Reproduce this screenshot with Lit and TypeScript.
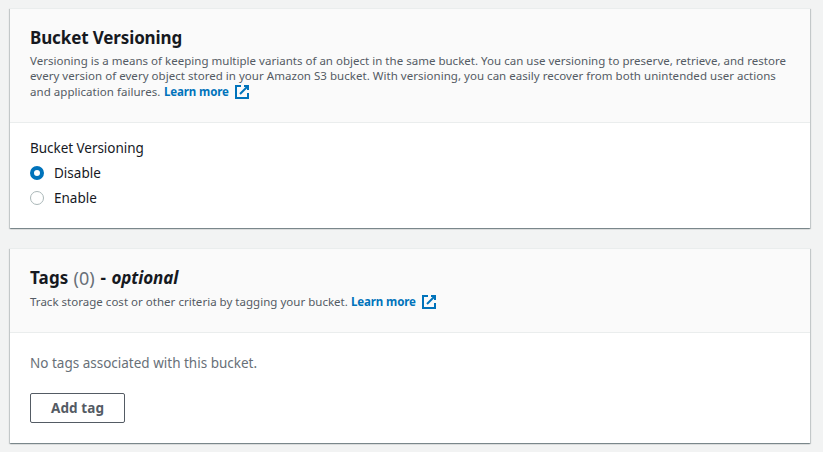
import { LitElement, html, css } from "lit";
import { customElement, property } from "lit/decorators.js";

@customElement("external-link")
class ExternalLink extends LitElement {
  static styles = css`
    :host { display: inline-flex; align-items: flex-start; color: #0073bb; font-weight: 700; }
    .label { display: block; width: 65px; white-space: nowrap; letter-spacing: -0.12px; }
    svg { display: block; margin: 0 0 -1px 5px; fill: none; stroke: currentColor; stroke-width: 2; }
  `;
  render() {
    return html`<span class="label"><slot></slot></span>
      <svg width="16" height="16" viewBox="0 0 16 16"><path d="M10 2h4v4" /><path d="M6 10l8-8" /><path d="M14 9.05V14H2V2h5" /></svg>`;
  }
}

@customElement("radio-option")
class RadioOption extends LitElement {
  @property({ type: Boolean }) checked = false;
  static styles = css`
    :host { display: flex; align-items: center; height: 25px; }
    svg { display: block; margin-right: 10px; }
    .off { fill: #fff; stroke: #aab7b8; }
    .on { fill: #fff; stroke: #0073bb; stroke-width: 4; }
  `;
  render() {
    return html`<svg width="14" height="14" viewBox="0 0 14 14">
        <circle class=${this.checked ? "on" : "off"} cx="7" cy="7" r=${this.checked ? 5 : 6.5} />
      </svg><slot></slot>`;
  }
}

@customElement("app-root")
class AppRoot extends LitElement {
  static styles = css`
    :host { display: flex; flex-direction: column; gap: 20px; box-sizing: border-box; height: 452px; overflow: hidden;
      padding: 8px 13px 9px 10px; background: #f2f3f3; color: #16191f;
      font-family: "Noto Sans", "Open Sans", sans-serif; font-size: 13.5px; line-height: 22px; }
    .panel { box-sizing: border-box; flex: none; background: #fff; border-top: 1px solid #eaeded;
      box-shadow: 0 1px 1px 0 rgba(0,28,36,.3), 1px 1px 1px 0 rgba(0,28,36,.15), -1px 1px 1px 0 rgba(0,28,36,.15); }
    .versioning { height: 220px; }
    .tags { height: 195px; }
    header { box-sizing: border-box; background: #fafafa; border-bottom: 1px solid #eaeded; padding: 18px 20px 0; }
    .versioning header { height: 114px; }
    .tags header { height: 84px; }
    h2 { display: flex; margin: 0; font-size: 17px; line-height: 22px; font-weight: 700; white-space: nowrap; }
    .title { letter-spacing: -0.13px; }
    .name { width: 43.5px; letter-spacing: 0.15px; }
    .count { width: 27px; font-size: 18px; font-weight: 400; color: #687078; }
    .dash { width: 11px; }
    h2 i { letter-spacing: -0.1px; }
    .desc { font-size: 11.5px; line-height: 15px; color: #545b64; padding-top: 4px; }
    .tags .desc { padding-top: 5px; }
    .line { display: flex; height: 15px; white-space: pre; }
    .line:nth-child(3) { margin-top: 1px; }
    .l1 { letter-spacing: 0.015px; }
    .l2 { letter-spacing: 0.03px; }
    .l3 { width: 134px; letter-spacing: 0.04px; }
    .l4 { width: 321px; letter-spacing: 0.02px; }
    .body { padding: 14px 20px 0; }
    .field { margin-bottom: 1px; letter-spacing: -0.04px; }
    .empty { color: #687078; padding-top: 5px; }
    button { display: block; box-sizing: border-box; width: 95px; height: 30px; margin-top: 19px; padding: 0;
      border: 1px solid #545b64; border-radius: 2px; background: #fff; color: #545b64; font: 700 13.5px/20px "Noto Sans", sans-serif; letter-spacing: 0.1px; }
  `;
  render() {
    return html`
      <section class="panel versioning">
        <header>
          <h2><span class="title">Bucket Versioning</span></h2>
          <div class="desc">
            <div class="line"><span class="l1">Versioning is a means of keeping multiple variants of an object in the same bucket. You can use versioning to preserve, retrieve, and restore</span></div>
            <div class="line"><span class="l2">every version of every object stored in your Amazon S3 bucket. With versioning, you can easily recover from both unintended user actions</span></div>
            <div class="line"><span class="l3">and application failures. </span><external-link>Learn more</external-link></div>
          </div>
        </header>
        <div class="body">
          <div class="field">Bucket Versioning</div>
          <radio-option checked>Disable</radio-option>
          <radio-option>Enable</radio-option>
        </div>
      </section>
      <section class="panel tags">
        <header>
          <h2><span class="name">Tags</span><span class="count">(0)</span><span class="dash">-</span><i>optional</i></h2>
          <div class="desc"><div class="line"><span class="l4">Track storage cost or other criteria by tagging your bucket. </span><external-link>Learn more</external-link></div></div>
        </header>
        <div class="body">
          <div class="empty">No tags associated with this bucket.</div>
          <button>Add tag</button>
        </div>
      </section>`;
  }
}
